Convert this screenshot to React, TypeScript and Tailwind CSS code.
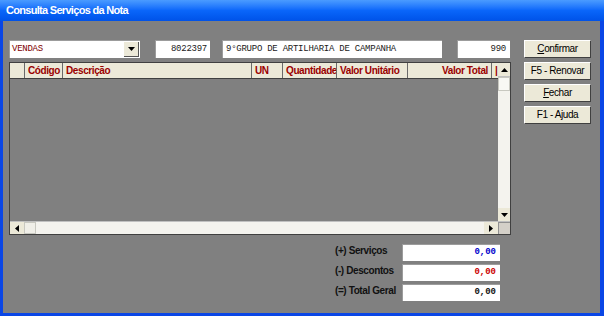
import React from "react";

const Tri = ({ dir }: { dir: "up" | "down" | "left" | "right" }) => {
  const pts: Record<string, string> = {
    up: "0,4 7,4 3.5,0",
    down: "0,0 7,0 3.5,4",
    left: "4,0 4,7 0,3.5",
    right: "0,0 0,7 4,3.5",
  };
  const vertical = dir === "up" || dir === "down";
  return (
    <svg width={vertical ? 7 : 4} height={vertical ? 4 : 7}>
      <polygon points={pts[dir]} fill="#000" />
    </svg>
  );
};

const Field = ({ text, className }: { text: string; className: string }) => (
  <div
    className={`h-[18px] bg-white border-t border-l border-[#9c9c9c] flex items-center font-['Liberation_Mono',monospace] text-[9px] tracking-[-0.25px] text-[#1a1a1a] whitespace-nowrap overflow-hidden ${className}`}
  >
    {text}
  </div>
);

const Button = ({ label, u }: { label: string; u?: string }) => (
  <button className="w-[67px] h-[18px] bg-[#ece9d8] border-t border-l border-[#fff] border-r border-b border-r-[#404040] border-b-[#404040] text-[10px] tracking-[-0.4px] text-black font-['Liberation_Sans',Arial,sans-serif] leading-none flex items-center justify-center">
    {u && <span className="underline">{u}</span>}
    {label}
  </button>
);

const cols = [
  { label: "", w: "w-[15px]", align: "justify-start" },
  { label: "Código", w: "w-[38px]", align: "justify-start" },
  { label: "Descrição", w: "w-[189px]", align: "justify-start" },
  { label: "UN", w: "w-[31px]", align: "justify-start" },
  { label: "Quantidade", w: "w-[54px]", align: "justify-start" },
  { label: "Valor Unitário", w: "w-[71px]", align: "justify-start" },
  { label: "Valor Total", w: "w-[84px]", align: "justify-end" },
  { label: "|", w: "w-[6px]", align: "justify-start" },
];

const totals = [
  { label: "(+) Serviços", color: "text-[#0000cc]" },
  { label: "(-) Descontos", color: "text-[#cc0000]" },
  { label: "(=) Total Geral", color: "text-[#111]" },
];

export default function App() {
  return (
    <div className="w-[604px] h-[316px] flex flex-col bg-[#0a46e6] overflow-hidden">
      {/* Title bar */}
      <div className="h-[21px] shrink-0 bg-gradient-to-b from-[#4a9bff] via-[#0a66fa] to-[#0052e8] flex items-center pl-[6px]">
        <span className="text-white font-bold text-[11px] tracking-[-0.7px] font-['Liberation_Sans',Arial,sans-serif]">
          Consulta Serviços da Nota
        </span>
      </div>

      {/* Body */}
      <div className="flex-1 ml-[3px] mr-[4px] mb-[3px] bg-[#808080] flex pt-[19px] pl-[6px]">
        {/* Left */}
        <div className="w-[502px] flex flex-col">
          {/* top row */}
          <div className="flex items-center h-[18px] w-[501px]">
            <div className="w-[131px] h-[18px] bg-white border-t border-l border-[#9c9c9c] flex items-center pl-[2px] pr-[1px]">
              <span className="flex-1 font-['Liberation_Mono',monospace] text-[9px] tracking-[-0.25px] text-[#800000]">VENDAS</span>
              <div className="w-[15px] h-[15px] bg-[#ece9d8] border-r border-b border-[#555] flex items-center justify-center">
                <Tri dir="down" />
              </div>
            </div>
            <Field text="8022397" className="ml-[15px] w-[55px] justify-end pr-[3px]" />
            <Field text="9°GRUPO DE ARTILHARIA DE CAMPANHA" className="ml-[12px] w-[220px] pl-[3px]" />
            <Field text="990" className="ml-[15px] w-[53px] justify-end pr-[4px]" />
          </div>

          {/* grid */}
          <div className="mt-[4px] w-[502px] h-[173px] border border-[#404040] flex flex-col">
            <div className="flex-1 flex">
              <div className="w-[488px] flex flex-col">
                <div className="h-[16px] flex bg-[#ece9d8] border-b border-[#404040]">
                  {cols.map((c, i) => (
                    <div
                      key={i}
                      className={`${c.w} shrink-0 h-full flex items-center ${c.align} border-r border-[#6a6a6a] px-[3px] overflow-hidden whitespace-nowrap font-['Liberation_Sans',Arial,sans-serif] font-bold text-[10px] tracking-[-0.4px] text-[#9a0000]`}
                    >
                      {c.label}
                    </div>
                  ))}
                </div>
                <div className="flex-1 bg-[#808080]" />
              </div>
              {/* vertical scrollbar */}
              <div className="w-[12px] flex flex-col bg-[#f4f3ee]">
                <div className="h-[14px] bg-[#ece9d8] border-b border-[#c0c0c0] flex items-center justify-center">
                  <Tri dir="up" />
                </div>
                <div className="h-[14px] bg-[#f8f8f4] border border-[#c8c8c0]" />
                <div className="flex-1" />
                <div className="h-[13px] bg-[#ece9d8] flex items-center justify-center">
                  <Tri dir="down" />
                </div>
              </div>
            </div>
            {/* horizontal scrollbar */}
            <div className="h-[13px] flex border-t border-[#c0c0c0]">
              <div className="w-[488px] flex bg-[#f4f3ee]">
                <div className="w-[14px] bg-[#ece9d8] flex items-center justify-center">
                  <Tri dir="left" />
                </div>
                <div className="w-[12px] bg-[#f0efe8] border border-[#c8c8c0]" />
                <div className="flex-1" />
                <div className="w-[14px] bg-[#ece9d8] flex items-center justify-center">
                  <Tri dir="right" />
                </div>
              </div>
              <div className="w-[12px] bg-[#d4d0c8] border-l border-t border-[#909090]" />
            </div>
          </div>

          {/* totals */}
          <div className="mt-[9px] pl-[326px] flex flex-col gap-[3px]">
            {totals.map((t) => (
              <div key={t.label} className="flex h-[17px]">
                <div className="w-[67px] pt-[1px] font-['Liberation_Sans',Arial,sans-serif] font-bold text-[10px] tracking-[-0.4px] text-[#111] leading-[12px] whitespace-nowrap">
                  {t.label}
                </div>
                <div
                  className={`w-[98px] h-[17px] bg-white border-t border-l border-[#9c9c9c] flex items-center justify-end pr-[4px] font-['Liberation_Mono',monospace] font-bold text-[9px] ${t.color}`}
                >
                  0,00
                </div>
              </div>
            ))}
          </div>
        </div>

        {/* Right buttons */}
        <div className="ml-[13px] flex flex-col gap-[4px]">
          <Button u="C" label="onfirmar" />
          <Button label="F5 - Renovar" />
          <Button u="F" label="echar" />
          <Button label="F1 - Ajuda" />
        </div>
      </div>
    </div>
  );
}
